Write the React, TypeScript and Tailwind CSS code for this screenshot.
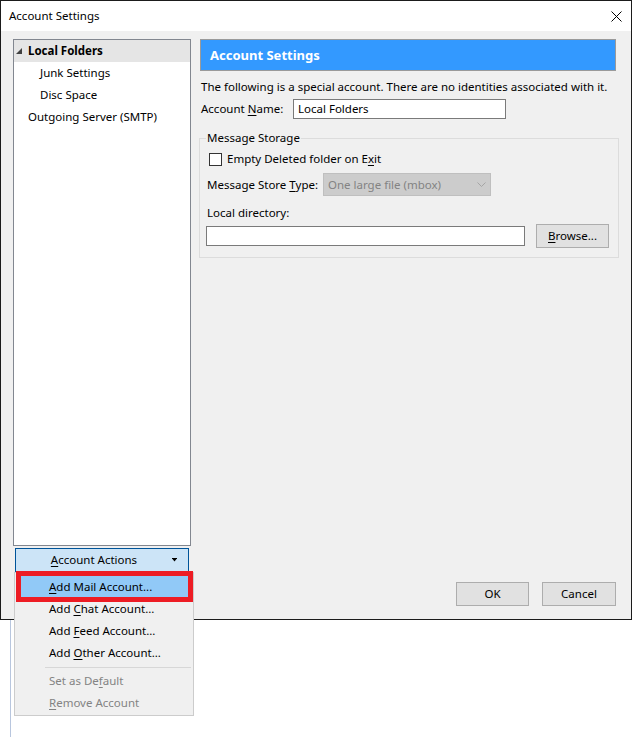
import React from "react";

const U = ({ children }: { children: React.ReactNode }) => (
  <span className="underline underline-offset-[2px]">{children}</span>
);

const TitleBar = () => (
  <div className="h-[30px] bg-white flex items-center justify-between pl-[8px] pr-[9px]">
    <span>Account Settings</span>
    <svg width="11" height="11" viewBox="0 0 11 11">
      <path d="M0.5 0.5 L10.5 10.5 M10.5 0.5 L0.5 10.5" stroke="#000" strokeWidth="1" />
    </svg>
  </div>
);

const TreeRow = ({ label, indent }: { label: string; indent: string }) => (
  <div className={`h-[22px] flex items-center ${indent}`}>{label}</div>
);

const LeftColumn = () => (
  <div className="w-[178px] ml-[12px] flex flex-col">
    <div className="h-[507px] border border-[#828790] bg-white">
      <div className="h-[22px] flex items-center bg-[#e5e5e5] pl-[2px]">
        <svg width="6" height="6" viewBox="0 0 6 6">
          <polygon points="6,0 6,6 0,6" fill="#404040" />
        </svg>
        <span className="ml-[6px] font-bold">Local Folders</span>
      </div>
      <TreeRow label="Junk Settings" indent="pl-[26px]" />
      <TreeRow label="Disc Space" indent="pl-[26px]" />
      <TreeRow label="Outgoing Server (SMTP)" indent="pl-[14px]" />
    </div>
    <div className="mt-[2px] mx-[2px] h-[24px] bg-[#cce4f7] border border-[#005499] flex items-center">
      <span className="flex-1 text-center">
        <U>A</U>ccount Actions
      </span>
      <svg width="5" height="4" viewBox="0 0 5 4" className="mr-[11px]">
        <rect x="0" y="0" width="5" height="1" fill="#000" />
        <polygon points="0.5,1 4.5,1 2.5,3.5" fill="#000" />
      </svg>
    </div>
  </div>
);

const WinButton = ({ children, w }: { children: React.ReactNode; w: string }) => (
  <div className={`${w} h-[24px] bg-[#e1e1e1] border border-[#adadad] flex items-center justify-center`}>
    {children}
  </div>
);

const RightColumn = () => (
  <div className="flex-1 mr-[12px] ml-[8px] flex flex-col">
    <div className="ml-[1px] mr-[3px] h-[32px] bg-[#3399ff] border border-[#9a9a9a] flex items-center pl-[9px] text-white font-bold text-[13px]">
      Account Settings
    </div>
    <div className="mt-[8px] pl-[2px] whitespace-nowrap">
      The following is a special account. There are no identities associated with it.
    </div>
    <div className="mt-[4px] pl-[2px] flex items-center">
      <span className="w-[92px]">
        Account <U>N</U>ame:
      </span>
      <div className="w-[213px] h-[20px] bg-white border border-[#7a7a7a] flex items-center pl-[4px]">
        Local Folders
      </div>
    </div>
    <fieldset className="mt-[11px] border border-[#dcdcdc] px-[6px] pb-[9px]">
      <legend className="px-[1px]">Message Storage</legend>
      <div className="mt-[5px] pl-[3px] flex items-center">
        <div className="w-[13px] h-[13px] bg-white border border-[#333333]" />
        <span className="ml-[5px]">
          Empty Deleted folder on E<U>x</U>it
        </span>
      </div>
      <div className="mt-[6px] pl-[1px] flex items-center">
        <span className="w-[116px]">
          Message Store <U>T</U>ype:
        </span>
        <div className="w-[168px] h-[23px] bg-[#cccccc] border border-[#bfbfbf] text-[#838383] flex items-center justify-between pl-[4px] pr-[4px]">
          <span>One large file (mbox)</span>
          <svg width="9" height="6" viewBox="0 0 9 6">
            <path d="M0.5 0.5 L4.5 4.5 L8.5 0.5" stroke="#a5a5a5" fill="none" strokeWidth="1" />
          </svg>
        </div>
      </div>
      <div className="mt-[9px] pl-[1px]">Local directory:</div>
      <div className="mt-[3px] flex items-center">
        <div className="w-[319px] h-[20px] bg-white border border-[#7a7a7a]" />
        <div className="ml-[11px]">
          <WinButton w="w-[73px]">
            <span>
              <U>B</U>rowse...
            </span>
          </WinButton>
        </div>
      </div>
    </fieldset>
    <div className="mt-auto mb-[13px] pr-[3px] flex justify-end gap-[13px]">
      <WinButton w="w-[73px]">OK</WinButton>
      <WinButton w="w-[74px]">Cancel</WinButton>
    </div>
  </div>
);

const MenuItem = ({
  children,
  active,
  disabled,
}: {
  children: React.ReactNode;
  active?: boolean;
  disabled?: boolean;
}) => (
  <div
    className={`h-[22px] mx-[2px] pl-[32px] flex items-center ${active ? "bg-[#91c9f7]" : ""} ${
      disabled ? "text-[#838383]" : ""
    }`}
  >
    {children}
  </div>
);

const ActionsMenu = () => (
  <div className="absolute left-[14px] top-[572px] w-[180px] h-[144px] bg-[#f0f0f0] border border-[#cccccc] pt-[3px]">
    <MenuItem active>
      <span>
        <U>A</U>dd Mail Account...
      </span>
    </MenuItem>
    <MenuItem>
      <span>
        Add <U>C</U>hat Account...
      </span>
    </MenuItem>
    <MenuItem>
      <span>
        Add <U>F</U>eed Account...
      </span>
    </MenuItem>
    <MenuItem>
      <span>
        Add <U>O</U>ther Account...
      </span>
    </MenuItem>
    <div className="h-[6px] flex flex-col justify-center">
      <div className="h-px bg-[#d7d7d7] ml-[30px] mr-[2px]" />
    </div>
    <MenuItem disabled>
      <span>
        Set as De<U>f</U>ault
      </span>
    </MenuItem>
    <MenuItem disabled>
      <span>
        <U>R</U>emove Account
      </span>
    </MenuItem>
  </div>
);

export default function App() {
  return (
    <div className="relative w-[632px] h-[737px] bg-white overflow-hidden font-['Noto_Sans',sans-serif] text-[11.5px] leading-[16px] text-black">
      <div className="w-[632px] h-[620px] border border-[#1b1b1b] flex flex-col">
        <TitleBar />
        <div className="flex-1 bg-[#f0f0f0] flex pt-[8px]">
          <LeftColumn />
          <RightColumn />
        </div>
      </div>
      <div className="absolute left-[10px] top-[620px] w-px h-[117px] bg-[#b8c6de]" />
      <ActionsMenu />
      <div className="absolute left-[16px] top-[571px] w-[177px] h-[31px] border-[5px] border-[#ed1c24]" />
    </div>
  );
}
